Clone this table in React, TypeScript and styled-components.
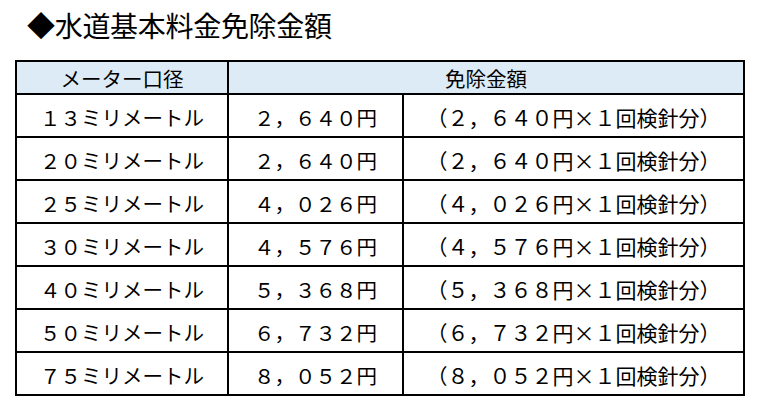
import React from "react";
import styled, { createGlobalStyle } from "styled-components";

const GlobalStyle = createGlobalStyle`
  html, body {
    margin: 0;
    padding: 0;
    background: #ffffff;
  }
  body {
    font-family: "Noto Sans CJK JP", "Noto Sans", sans-serif;
    color: #000000;
  }
`;

const Page = styled.div`
  width: 761px;
  height: 406px;
  box-sizing: border-box;
  padding: 11px 0 0 15px;
  overflow: hidden;
`;

const Title = styled.h1`
  margin: 0 0 21px 12px;
  font-family: "Noto Sans CJK JP", sans-serif;
  font-weight: 400;
  font-size: 28px;
  line-height: 28px;
  height: 28px;
  letter-spacing: -0.3px;
`;

const Grid = styled.div`
  display: grid;
  width: 730px;
  box-sizing: border-box;
  grid-template-columns: 210px 173px 339px;
  grid-template-rows: 31px repeat(7, 41px);
  gap: 2px;
  padding: 2px;
  background: #000000;
`;

const Cell = styled.div<{ $header?: boolean; $span?: number; $wide?: boolean }>`
  background: ${(p) => (p.$header ? "#DDEBF7" : "#ffffff")};
  grid-column: ${(p) => (p.$span ? `span ${p.$span}` : "auto")};
  display: flex;
  align-items: center;
  justify-content: center;
  font-family: "Noto Sans CJK JP", sans-serif;
  font-size: ${(p) => (p.$wide ? "21px" : "20.5px")};
  line-height: 1;
  padding-top: ${(p) => (p.$header ? "1px" : "3px")};
  box-sizing: border-box;
  white-space: nowrap;
`;

const rows: [string, string][] = [
  ["１３", "２，６４０"],
  ["２０", "２，６４０"],
  ["２５", "４，０２６"],
  ["３０", "４，５７６"],
  ["４０", "５，３６８"],
  ["５０", "６，７３２"],
  ["７５", "８，０５２"],
];

export default function App() {
  return (
    <Page>
      <GlobalStyle />
      <Title>◆水道基本料金免除金額</Title>
      <Grid>
        <Cell $header>メーター口径</Cell>
        <Cell $header $span={2}>
          免除金額
        </Cell>
        {rows.map(([size, amount]) => (
          <React.Fragment key={size}>
            <Cell>{size}ミリメートル</Cell>
            <Cell>{amount}円</Cell>
            <Cell $wide>（{amount}円×１回検針分）</Cell>
          </React.Fragment>
        ))}
      </Grid>
    </Page>
  );
}
